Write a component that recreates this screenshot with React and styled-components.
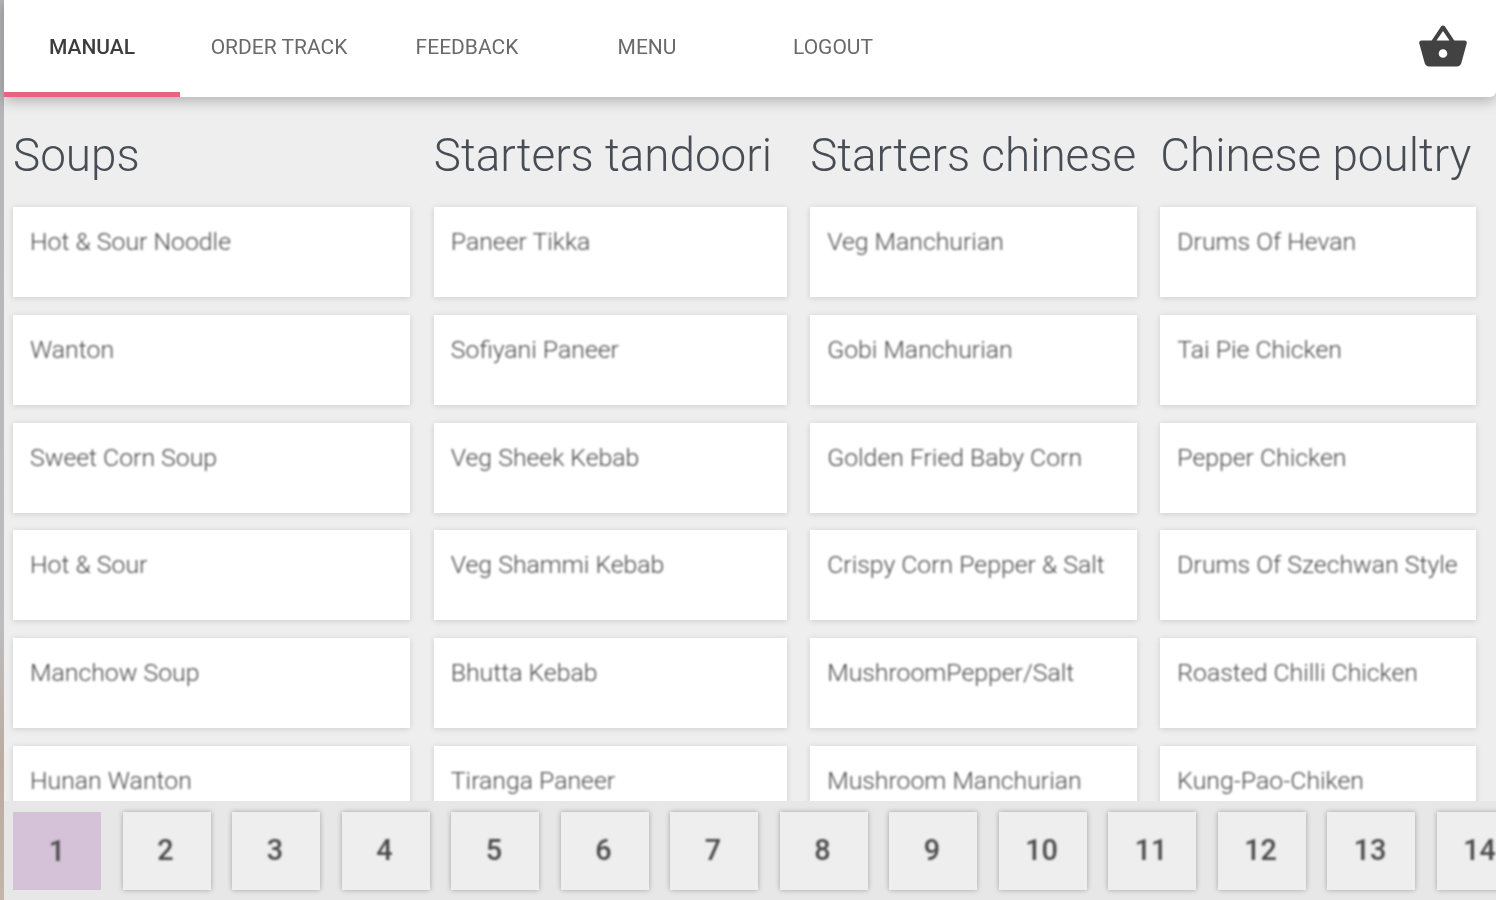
import React from 'react';
import styled, { createGlobalStyle } from 'styled-components';

const GlobalStyle = createGlobalStyle`
    html, body {
        margin: 0;
        padding: 0;
        height: 100%;
        overflow: hidden;
        background: #eeeeee;
        font-family: Roboto, "Liberation Sans", sans-serif;
    }
`;

const Page = styled.div`
    display: flex;
    flex-direction: column;
    height: 900px;
    border-left: 4px solid #b9b8ba;
    border-image: linear-gradient(#b4b3b6 0%, #bdbcbe 70%, #bcab9e 85%, #c4b5a8 100%) 1;
    box-sizing: border-box;
    background: #eeeeee;
`;

const NavBar = styled.header`
    flex: none;
    display: flex;
    align-items: stretch;
    justify-content: space-between;
    height: 97px;
    padding-right: 27px;
    background: #ffffff;
    border-bottom-right-radius: 6px;
    box-shadow: 0 4px 14px rgba(0, 0, 0, 0.26);
    position: relative;
    z-index: 2;
`;

const Tabs = styled.nav`
    display: flex;
`;

const Tab = styled.a`
    width: ${(p) => p.$width}px;
    height: 97px;
    box-sizing: border-box;
    padding-top: 2px;
    display: flex;
    align-items: center;
    justify-content: center;
    font-size: 21px;
    font-weight: ${(p) => (p.$active ? 500 : 400)};
    color: ${(p) => (p.$active ? '#3d3d3d' : '#6a6a6a')};
    text-transform: uppercase;
    border-bottom: 5px solid ${(p) => (p.$active ? '#e9637f' : 'transparent')};
    filter: blur(0.7px);
`;

const CartButton = styled.button`
    border: 0;
    padding: 0;
    background: none;
    display: flex;
    align-items: center;
    margin-top: -3px;
    filter: blur(0.6px);
`;

const BasketIcon = styled.svg.attrs({
    xmlns: 'http://www.w3.org/2000/svg',
    viewBox: '0 0 24 24',
})`
    width: 52px;
    height: 52px;
    fill: #424242;
`;

const Menu = styled.main`
    flex: 1;
    min-height: 0;
    overflow: hidden;
    display: grid;
    grid-template-columns: 397.4px 353px 326.8px 316px;
    column-gap: 23.4px;
    padding-left: 9px;
`;

const Column = styled.section`
    display: flex;
    flex-direction: column;
    min-width: 0;
`;

const Heading = styled.h2`
    margin: 0;
    height: 110px;
    padding-top: 6px;
    box-sizing: border-box;
    display: flex;
    align-items: center;
    font-size: 45.8px;
    font-weight: 300;
    color: #484d55;
    white-space: nowrap;
    filter: blur(0.7px);
`;

const ItemList = styled.div`
    display: flex;
    flex-direction: column;
    gap: 17.8px;
`;

const ItemCard = styled.div`
    flex: none;
    height: 90px;
    box-sizing: border-box;
    padding: 19px 17px 0;
    background: #ffffff;
    box-shadow: 0 1px 6px rgba(0, 0, 0, 0.14);
`;

const ItemName = styled.span`
    display: block;
    font-size: 24.8px;
    line-height: 32px;
    font-weight: 300;
    color: #4a4a4a;
    white-space: nowrap;
    filter: blur(0.8px);
`;

const Pagination = styled.footer`
    flex: none;
    height: 99px;
    box-sizing: border-box;
    padding: 11px 0 0 9px;
    display: flex;
    gap: 21.5px;
    overflow: hidden;
    background: #e7e7e7;
    position: relative;
    z-index: 1;
`;

const PageButton = styled.button`
    flex: none;
    width: 88px;
    height: 78px;
    padding: 0 ${(p) => (p.$active ? 0 : 2)}px ${(p) => (p.$active ? 0 : 3)}px 0;
    border: 0;
    background: ${(p) => (p.$active ? '#d5c2d8' : '#eeeeee')};
    box-shadow: ${(p) => (p.$active ? 'none' : '0 0 5px rgba(0, 0, 0, 0.3)')};
    font-family: inherit;
    font-size: 28.8px;
    font-weight: 500;
    color: #4a4a4a;
`;

const PageNumber = styled.span`
    display: block;
    filter: blur(0.8px);
`;

const tabs = [
    { label: 'Manual', width: 176, active: true },
    { label: 'Order Track', width: 198 },
    { label: 'Feedback', width: 178 },
    { label: 'Menu', width: 182 },
    { label: 'Logout', width: 190 },
];

const columns = [
    { title: 'Soups', items: ['Hot & Sour Noodle', 'Wanton', 'Sweet Corn Soup', 'Hot & Sour', 'Manchow Soup', 'Hunan Wanton'] },
    { title: 'Starters tandoori', items: ['Paneer Tikka', 'Sofiyani Paneer', 'Veg Sheek Kebab', 'Veg Shammi Kebab', 'Bhutta Kebab', 'Tiranga Paneer'] },
    { title: 'Starters chinese', items: ['Veg Manchurian', 'Gobi Manchurian', 'Golden Fried Baby Corn', 'Crispy Corn Pepper & Salt', 'MushroomPepper/Salt', 'Mushroom Manchurian'] },
    { title: 'Chinese poultry', items: ['Drums Of Hevan', 'Tai Pie Chicken', 'Pepper Chicken', 'Drums Of Szechwan Style', 'Roasted Chilli Chicken', 'Kung-Pao-Chiken'] },
];

const pages = Array.from({ length: 14 }, (_, i) => i + 1);

export default function App() {
    return (
        <>
            <GlobalStyle />
            <Page>
                <NavBar>
                    <Tabs>
                        {tabs.map((tab) => (
                            <Tab key={tab.label} $width={tab.width} $active={tab.active}>
                                {tab.label}
                            </Tab>
                        ))}
                    </Tabs>
                    <CartButton aria-label="Basket">
                        <BasketIcon>
                            <path d="M17.21 9l-4.38-6.56c-.19-.28-.51-.42-.83-.42-.32 0-.64.14-.83.43L6.79 9H2c-.55 0-1 .45-1 1 0 .09.01.18.04.27l2.54 9.27c.23.84 1 1.46 1.92 1.46h13c.92 0 1.69-.62 1.93-1.46l2.54-9.27L23 10c0-.55-.45-1-1-1h-4.79zM9 9l3-4.4L15 9H9zm3 8c-1.1 0-2-.9-2-2s.9-2 2-2 2 .9 2 2-.9 2-2 2z" />
                        </BasketIcon>
                    </CartButton>
                </NavBar>
                <Menu>
                    {columns.map((column) => (
                        <Column key={column.title}>
                            <Heading>{column.title}</Heading>
                            <ItemList>
                                {column.items.map((item) => (
                                    <ItemCard key={item}>
                                        <ItemName>{item}</ItemName>
                                    </ItemCard>
                                ))}
                            </ItemList>
                        </Column>
                    ))}
                </Menu>
                <Pagination>
                    {pages.map((page) => (
                        <PageButton key={page} $active={page === 1}>
                            <PageNumber>{page}</PageNumber>
                        </PageButton>
                    ))}
                </Pagination>
            </Page>
        </>
    );
}
